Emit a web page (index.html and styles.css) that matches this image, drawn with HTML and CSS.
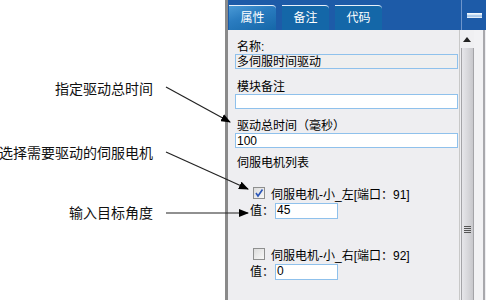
FILE: index.html
```html
<!DOCTYPE html>
<html>
<head>
<meta charset="utf-8">
<link rel="stylesheet" href="styles.css">
</head>
<body>
<div class="page">
  <div class="canvas">
    <div class="note note-1">指定驱动总时间</div>
    <div class="note note-2">选择需要驱动的伺服电机</div>
    <div class="note note-3">输入目标角度</div>
  </div>
  <div class="panel">
    <div class="header">
      <div class="tabs">
        <div class="tab active">属性</div>
        <div class="tab">备注</div>
        <div class="tab">代码</div>
      </div>
      <div class="hdr-sep"></div>
      <div class="minimize"><span></span></div>
    </div>
    <div class="body">
      <div class="content">
        <div class="field f1">
          <div class="label">名称:</div>
          <div class="input disabled">多伺服时间驱动</div>
        </div>
        <div class="field f2">
          <div class="label">模块备注</div>
          <div class="input"></div>
        </div>
        <div class="field f3">
          <div class="label">驱动总时间（毫秒）</div>
          <div class="input">100</div>
        </div>
        <div class="section">伺服电机列表</div>
        <div class="motor m1">
          <div class="check-row">
            <span class="checkbox checked"><svg viewBox="0 0 12 12" width="12" height="12"><path d="M3 6 L5 9 L9.5 2.5" fill="none" stroke="#2b56b8" stroke-width="1.6"/></svg></span>
            <span>伺服电机-小_左[端口：91]</span>
          </div>
          <div class="value-row">
            <span class="vlabel">值：</span>
            <div class="small-input">45</div>
          </div>
        </div>
        <div class="motor m2">
          <div class="check-row">
            <span class="checkbox"></span>
            <span>伺服电机-小_右[端口：92]</span>
          </div>
          <div class="value-row">
            <span class="vlabel">值：</span>
            <div class="small-input">0</div>
          </div>
        </div>
      </div>
      <div class="scrollbar">
        <div class="sb-up"><svg width="8" height="5" viewBox="0 0 8 5"><path d="M0 5 L4 0 L8 5 Z" fill="#222"/></svg></div>
        <div class="sb-thumb"><div class="grip"><i></i><i></i><i></i><i></i></div></div>
      </div>
      <div class="edge"></div>
    </div>
  </div>
  <svg class="arrows" width="486" height="300" viewBox="0 0 486 300">
    <defs>
      <marker id="ah" markerWidth="10" markerHeight="8" refX="9" refY="4" orient="auto" markerUnits="userSpaceOnUse">
        <path d="M0 0 L10 4 L0 8 Z" fill="#000"/>
      </marker>
    </defs>
    <line x1="166" y1="87" x2="230" y2="122" stroke="#222" stroke-width="1.2" marker-end="url(#ah)"/>
    <line x1="166" y1="152" x2="248" y2="189" stroke="#222" stroke-width="1.2" marker-end="url(#ah)"/>
    <line x1="166" y1="213" x2="248" y2="213" stroke="#222" stroke-width="1.2" marker-end="url(#ah)"/>
  </svg>
</div>
</body>
</html>
```

FILE: styles.css
```css
* { box-sizing: border-box; }
html, body { margin: 0; padding: 0; }
body {
  font-family: "Liberation Sans", "Noto Sans CJK SC", sans-serif;
  font-size: 12px;
  color: #000;
  background: #fff;
}
.page {
  position: relative;
  width: 486px;
  height: 300px;
  display: flex;
  overflow: hidden;
}
.canvas {
  position: relative;
  width: 225px;
  flex: none;
  background: #fff;
}
.note {
  position: absolute;
  right: 72px;
  font-size: 14px;
  line-height: 16px;
  white-space: nowrap;
  color: #111;
}
.note-1 { top: 81px; }
.note-2 { top: 145px; }
.note-3 { top: 205px; }

.panel {
  flex: 1;
  display: flex;
  flex-direction: column;
  border-left: 3px solid #8a8a8a;
  background: #eeeef1;
}
.header {
  height: 30px;
  flex: none;
  display: flex;
  align-items: stretch;
  background: #1d5ba8;
}
.tabs {
  display: flex;
  gap: 6px;
  padding-top: 5px;
  width: 233px;
}
.tab {
  width: 47px;
  color: #fff;
  font-size: 12px;
  line-height: 22px;
  text-align: center;
  background: #1467a8;
  border-top: 1px solid #e8f0fa;
  border-radius: 0 4px 0 0;
  padding-top: 1px;
}
.tab.active {
  background: linear-gradient(160deg, #4a9ad6 0%, #2a7cc0 40%, #1567a8 100%);
  margin-left: 1px;
}
.hdr-sep {
  width: 1px;
  background: #6d95cc;
  flex: none;
}
.minimize {
  flex: 1;
  display: flex;
  align-items: center;
  justify-content: center;
}
.minimize span {
  display: block;
  width: 15px;
  height: 5px;
  background: linear-gradient(#ffffff 0%, #cfe2f5 40%, #8fb8e3 60%, #ffffff 100%);
}
.body {
  flex: 1;
  display: flex;
}
.content {
  width: 231px;
  flex: none;
  padding: 10px 0 0 7px;
}
.label {
  padding-left: 2px;
  line-height: 14px;
  height: 14px;
  white-space: nowrap;
}
.input {
  width: 223px;
  height: 15px;
  border: 1px solid #8fc1ec;
  background: #fff;
  line-height: 14px;
  padding-left: 1px;
  white-space: nowrap;
}
.input.disabled { background: #efefef; }
.f2 { margin-top: 11px; }
.f3 { margin-top: 10px; }
.section {
  margin-top: 8px;
  padding-left: 2px;
  line-height: 14px;
}
.motor { padding-left: 15px; }
.m1 { margin-top: 16px; }
.m2 { margin-top: 28px; }
.check-row {
  display: flex;
  align-items: center;
  gap: 6px;
  height: 14px;
  padding-left: 3px;
  white-space: nowrap;
}
.checkbox {
  width: 12px;
  height: 12px;
  border: 1px solid #8e8f8f;
  background: linear-gradient(135deg, #dcdcdc, #f8f8f8);
  display: block;
  flex: none;
}
.checkbox svg { display: block; margin: -1px; }
.value-row {
  margin-top: 3px;
  display: flex;
  align-items: center;
  gap: 1px;
  height: 16px;
}
.vlabel { line-height: 14px; }
.small-input {
  width: 63px;
  height: 16px;
  border: 1px solid #8fc1ec;
  background: #fff;
  line-height: 13px;
  padding-left: 1px;
}
.scrollbar {
  width: 15px;
  flex: none;
  display: flex;
  flex-direction: column;
  border-left: 1px solid #c8c8c8;
}
.sb-up {
  height: 18px;
  display: flex;
  align-items: center;
  justify-content: center;
  background: #f0f0f2;
}
.sb-thumb {
  flex: 1;
  margin-left: 1px;
  border-left: 1px solid #a4a4a8;
  border-right: 1px solid #a4a4a8;
  background: linear-gradient(90deg, #e6e6ea 0%, #d8d8dc 50%, #c8c8cc 100%);
  display: flex;
  justify-content: center;
}
.grip {
  margin-top: 178px;
  display: flex;
  flex-direction: column;
  gap: 1px;
}
.grip i {
  display: block;
  width: 7px;
  height: 1px;
  background: #555;
}
.edge {
  flex: 1;
  background: #f2f2f4;
  border-right: 2px solid #a8a8ac;
  margin-right: 1px;
}
.arrows {
  position: absolute;
  left: 0;
  top: 0;
  pointer-events: none;
}
```
